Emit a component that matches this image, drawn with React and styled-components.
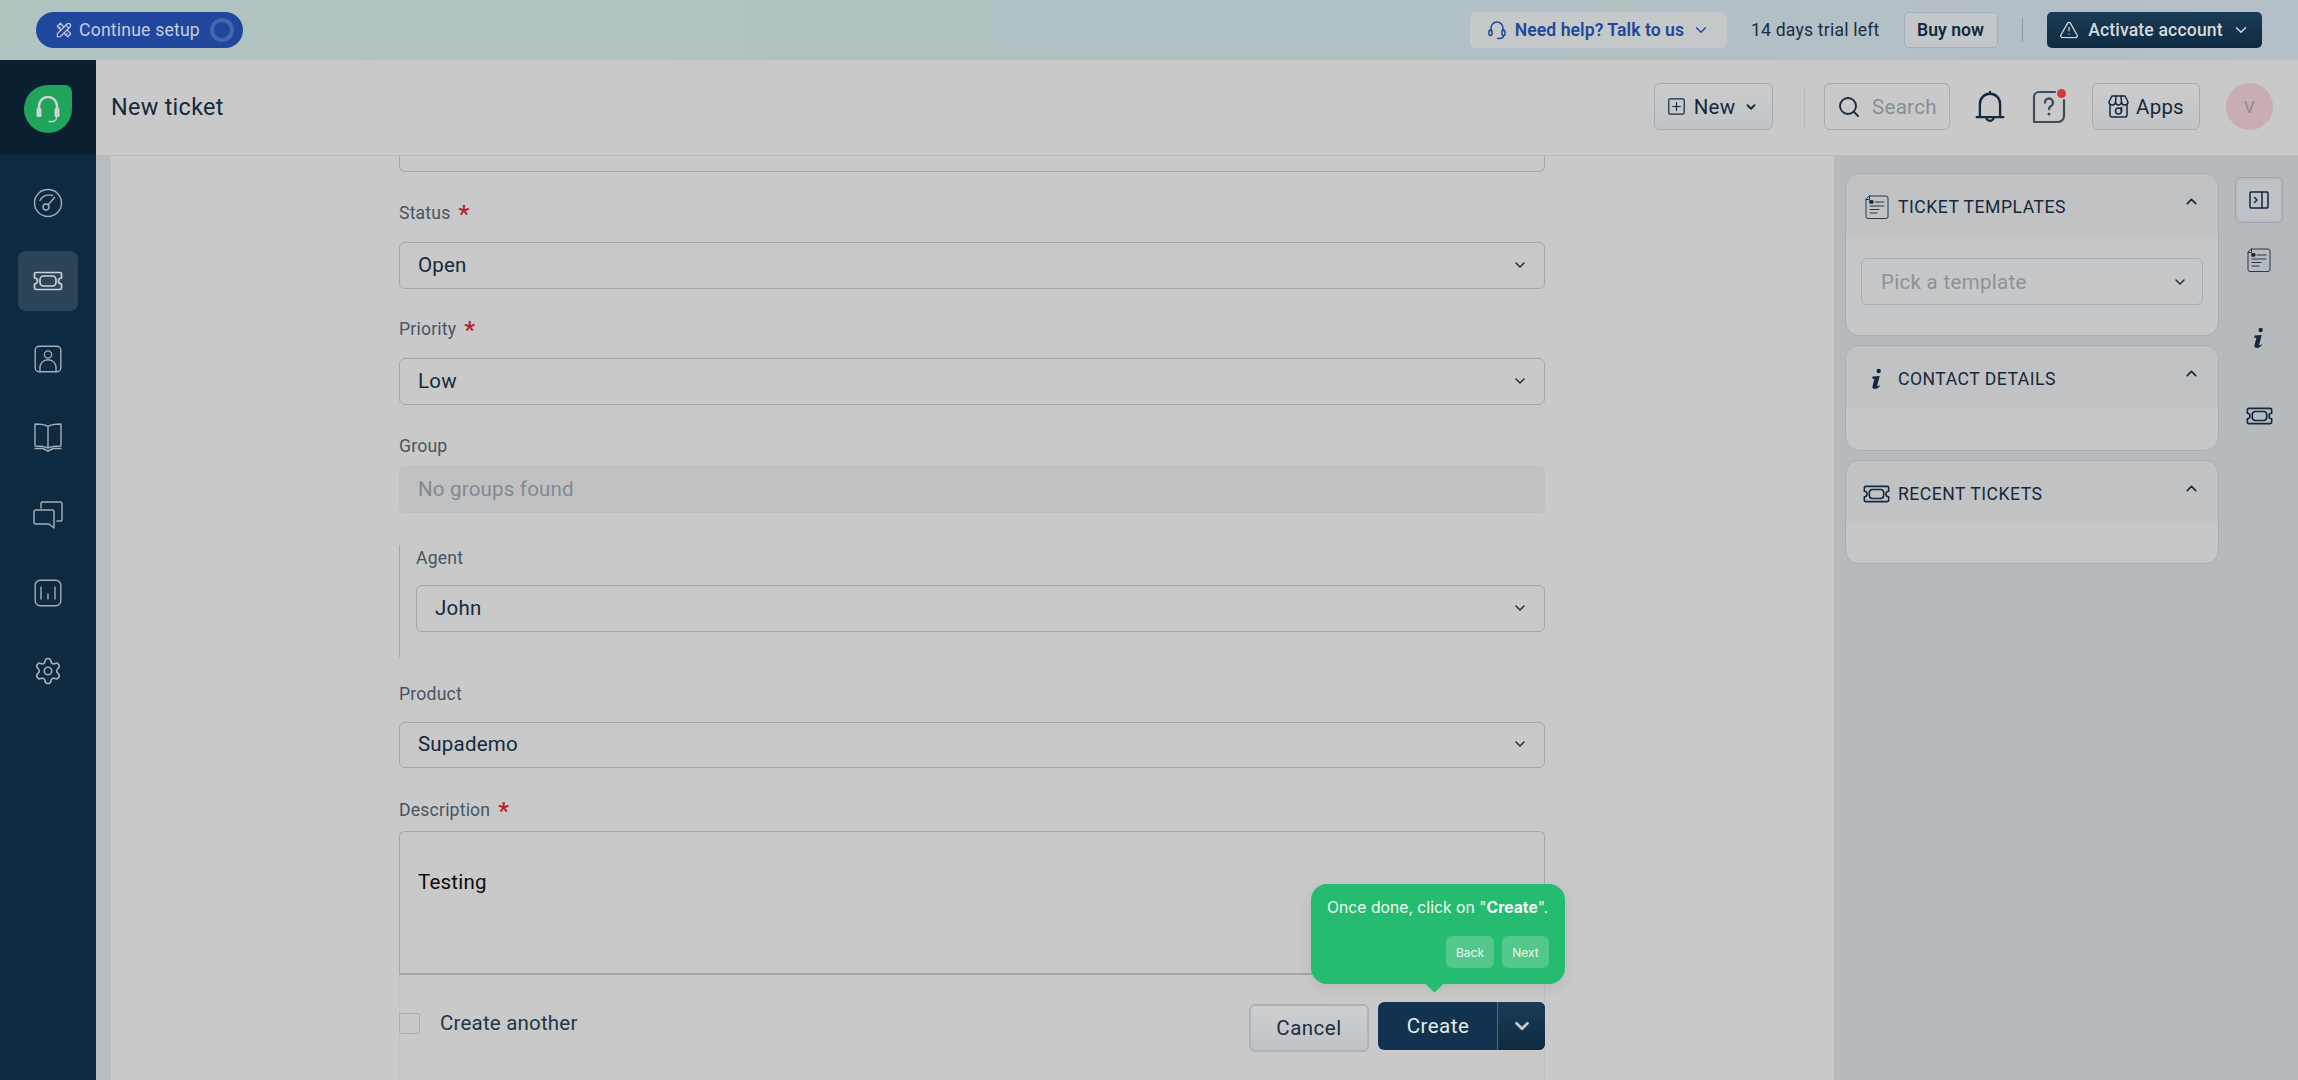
import React from 'react';
import styled, { createGlobalStyle } from 'styled-components';
import { ChevronDown, ChevronUp, Search, Settings, TriangleAlert } from 'lucide-react';
import { TbTools } from 'react-icons/tb';

const Global = createGlobalStyle`
  html, body { margin: 0; padding: 0; height: 1080px; overflow: hidden; }
  body { font-family: Roboto, "Liberation Sans", sans-serif; background: #c9c9c9; color: #14293c; }
  * { box-sizing: border-box; }
`;

const Page = styled.div`display: flex; flex-direction: column; width: 2298px; height: 1080px; overflow: hidden;`;

const TopBar = styled.header`
  height: 60px; flex: none; display: flex; align-items: center; padding: 0 36px;
  background: linear-gradient(90deg, #b1c4c0 0%, #b0c1c2 40%, #b4bfc7 100%);
`;
const SetupPill = styled.div`
  width: 207px; height: 36px; border-radius: 18px; background: #20479d; color: #c5cdde;
  display: flex; align-items: center; padding-left: 19px; gap: 6px; font-size: 17.6px; letter-spacing: .2px;
`;
const SetupRing = styled.span`
  width: 24px; height: 24px; border-radius: 50%; border: 4px solid #4565ac; margin-left: 4px; flex: none;
`;
const TopRight = styled.div`margin-left: auto; display: flex; align-items: center;`;
const HelpChip = styled.div`
  width: 257px; height: 36px; border-radius: 6px; background: #c6c9ca; color: #20479d;
  display: flex; align-items: center; justify-content: center; gap: 8px; font-size: 17.6px; font-weight: 600; letter-spacing: .05px;
`;
const Trial = styled.span`font-size: 17.6px; margin: 0 24px; color: #1a2e40; white-space: nowrap; letter-spacing: .2px;`;
const BuyBtn = styled.div`
  width: 94px; height: 36px; border-radius: 5px; border: 1.5px solid #a5aeb6; background: #c4c7c9;
  display: flex; align-items: center; justify-content: center; font-size: 17.6px; font-weight: 600;
`;
const VLine = styled.span`
  width: 1.5px; background: ${p => p.$c}; height: ${p => p.$h}px; margin: 0 ${p => p.$mr}px 0 ${p => p.$ml}px; flex: none;
`;
const ActivateBtn = styled.div`
  width: 215px; height: 36px; border-radius: 5px; background: linear-gradient(180deg, #1b3c56, #0e2b42); color: #d6d9dc;
  display: flex; align-items: center; justify-content: center; gap: 9px; font-size: 17.6px; font-weight: 500; letter-spacing: .15px;
`;

const Body = styled.div`flex: 1; display: flex; min-height: 0;`;
const Sidebar = styled.aside`width: 96px; flex: none; background: #0e2a40; display: flex; flex-direction: column;`;
const LogoArea = styled.div`height: 95px; background: #0a1f30; display: flex; align-items: center; justify-content: center;`;
const Logo = styled.div`
  width: 48px; height: 48px; background: #20a35b; border-radius: 50% 7px 50% 50%;
  display: flex; align-items: center; justify-content: center; margin-top: 2px;
`;
const SideNav = styled.nav`display: flex; flex-direction: column; align-items: center; gap: 18px; padding-top: 18px;`;
const SideItem = styled.div`
  width: 60px; height: 60px; border-radius: 8px; display: flex; align-items: center; justify-content: center;
  background: ${p => p.$active ? '#2b4458' : 'transparent'}; color: ${p => p.$active ? '#cdd2d6' : '#a3aeb6'};
`;

const MainCol = styled.div`flex: 1; display: flex; flex-direction: column; min-width: 0;`;
const Header = styled.div`
  height: 96px; flex: none; background: #c9c9c9; border-bottom: 1px solid #b6bcc2; display: flex; align-items: center; padding: 0 25px 2px 15px;
`;
const Title = styled.h1`margin: 0; font-size: 23.4px; font-weight: 400; color: #15293c; letter-spacing: .3px;`;
const HeaderRight = styled.div`margin-left: auto; display: flex; align-items: center;`;
const HeadBtn = styled.div`
  height: 47px; width: ${p => p.$w}px; border-radius: 6px; border: 1.5px solid #a4adb5; margin-left: ${p => p.$ml || 0}px;
  background: linear-gradient(180deg, #cbcccd, #c1c4c7);
  display: flex; align-items: center; justify-content: center; gap: ${p => p.$gap}px; font-size: 20.5px; color: #15293c; flex: none; letter-spacing: .2px;
`;
const SearchBox = styled.div`
  height: 47px; width: 126px; border-radius: 6px; border: 1.5px solid #a4adb5; display: flex; align-items: center; gap: 11px; padding-left: 12px;
  font-size: 20.5px; color: #858e97; flex: none; letter-spacing: .3px;
`;
const IconSlot = styled.div`width: 40px; display: flex; justify-content: center; position: relative; flex: none; margin-left: ${p => p.$ml}px;`;
const RedDot = styled.span`position: absolute; width: 9px; height: 9px; border-radius: 50%; background: #d23b3b; top: -1px; right: 3px;`;
const Avatar = styled.div`
  width: 47px; height: 47px; border-radius: 50%; background: #c8aeb0; color: #8f8a8e; font-size: 17px; margin-left: 26px;
  display: flex; align-items: center; justify-content: center;
`;

const Content = styled.div`flex: 1; display: flex; min-height: 0; overflow: hidden;`;
const Gutter = styled.div`width: 15px; flex: none; background: #b8bcc0;`;
const FormArea = styled.main`flex: 1; background: #c9c9c9; padding-left: 288px; min-width: 0;`;
const FormCol = styled.div`width: 1146px; display: flex; flex-direction: column; position: relative;`;
const CutField = styled.div`
  height: 16px; border: 1.5px solid #9fa8b1; border-top: 0; border-radius: 0 0 6px 6px;
`;
const Group = styled.div`margin-top: ${p => p.$mt}px;`;
const Label = styled.div`
  height: 24px; line-height: 24px; font-size: 17.6px; color: #465564; display: flex; margin-bottom: ${p => p.$mb}px; letter-spacing: .2px;
`;
const Star = styled.span`color: #b8222c; font-size: 24px; font-weight: 600; margin-left: 8px; line-height: 26px;`;
const Select = styled.div`
  height: ${p => p.$h || 47}px; border: 1.5px solid #9fa8b1; border-radius: 6px; display: flex; align-items: center; justify-content: space-between;
  padding: 0 16px 2px 18px; font-size: 20.5px; color: #15293c; letter-spacing: .2px;
  background: ${p => p.$disabled ? '#c0c1c3' : 'transparent'};
  border-color: ${p => p.$disabled ? '#bcbfc2' : '#9fa8b1'};
  ${p => p.$disabled ? 'color: #808a94;' : ''}
`;
const AgentGroup = styled.div`
  margin-top: 32px; border-left: 1.5px solid #9fa8b1; padding: 1px 0 25px 16px; height: 112px;
`;
const TextArea = styled.div`
  height: 144px; border: 1.5px solid #9fa8b1; border-bottom-width: 2.5px; border-radius: 6px 6px 0 0; padding: 35px 18px 0; font-size: 20.5px; line-height: 30px; color: #0d0d0d; letter-spacing: .2px;
`;
const Footer = styled.div`
  height: 110px; border-left: 1px solid #c0c2c4; border-right: 1px solid #bdc0c3; display: flex; align-items: flex-start; justify-content: space-between; padding-top: 27px;
`;
const CheckRow = styled.label`display: flex; align-items: center; gap: 20px; font-size: 20.5px; color: #20364a; margin: 0 0 0 -1px; height: 42px; letter-spacing: .2px;`;
const Check = styled.span`width: 21px; height: 21px; border: 1.5px solid #a6aeb6; border-radius: 2px; flex: none;`;
const Actions = styled.div`display: flex; gap: 9px; align-items: flex-start; position: relative; margin-right: -1px;`;
const CancelBtn = styled.div`
  width: 120px; height: 48px; border-radius: 6px; border: 2px solid #aeb3b9; margin-top: 2px; background: linear-gradient(180deg, #cdcfd1, #c0c3c6);
  display: flex; align-items: center; justify-content: center; font-size: 20.5px; color: #1b2d40; letter-spacing: .5px;
`;
const CreateBtn = styled.div`
  width: 167px; height: 48px; border-radius: 6px; overflow: hidden; display: flex; background: #12334f; color: #e6e9ec; font-size: 20.5px; box-shadow: 0 0 1px #fff; letter-spacing: .5px;
`;
const CreateMain = styled.div`flex: 1; display: flex; align-items: center; justify-content: center; padding-left: 1px;`;
const CreateCaret = styled.div`
  width: 48px; border-left: 1px solid #4f6a80; background: linear-gradient(180deg, #1b3c56, #0e2a40); color: #c2c8cd; display: flex; align-items: center; justify-content: center;
`;
const Tip = styled.div`
  position: absolute; left: 62px; bottom: 68px; width: 254px; height: 100px; border-radius: 16px; background: #25bc6f; color: #f4fbf7;
  font-family: Inter, sans-serif;
  padding: 13px 16px 0; font-size: 15.7px; line-height: 21px; box-shadow: 0 4px 16px rgba(0,0,0,.08); white-space: nowrap; letter-spacing: .02px;
  &::after { content: ''; position: absolute; left: 117px; bottom: -6px; width: 13px; height: 13px; background: #25bc6f; transform: rotate(45deg); border-radius: 1px; }
`;
const TipActions = styled.div`display: flex; justify-content: flex-end; gap: 8px; margin-top: 18px;`;
const TipBtn = styled.span`
  height: 32px; width: ${p => p.$w}px; background: #52c98a; border-radius: 6px; font-size: 12px; display: flex; align-items: center; justify-content: center; color: #eef9f3;
`;

const RightPanel = styled.aside`width: 464px; flex: none; background: #b6babd; display: flex; padding: 17px 0 0 11px; gap: 16px;`;
const Cards = styled.div`width: 374px; display: flex; flex-direction: column; gap: 9px; flex: none;`;
const Card = styled.section`
  border: 1.5px solid #a4acb4; border-radius: 14px; background: #c6c7c8; height: ${p => p.$h}px; overflow: hidden;
`;
const CardHead = styled.div`
  height: 62px; background: #c0c2c4; display: flex; align-items: center; padding: 4px 18px 0 ${p => p.$pl}px; font-size: 17.6px; color: #15293c; letter-spacing: .5px;
`;
const CardIcon = styled.span`width: ${p => p.$w}px; display: flex; justify-content: center; margin-right: ${p => p.$mr}px; flex: none;`;
const CardChevron = styled.span`margin-left: auto; display: flex; margin-top: -11px;`;
const CardBody = styled.div`padding: 22px 15px 0;`;
const TemplateSelect = styled.div`
  height: 47px; border: 1.5px solid #a4acb4; border-radius: 6px; display: flex; align-items: center; justify-content: space-between; padding: 0 14px 0 19px; font-size: 20.5px; color: #8b939b; letter-spacing: .3px;
`;
const Rail = styled.div`display: flex; flex-direction: column; align-items: center; width: 48px; padding-top: 4px; gap: 32px; flex: none;`;
const RailBtn = styled.div`
  width: 48px; height: 46px; display: flex; align-items: center; justify-content: center; color: #15293c; border-radius: 6px; flex: none;
  ${p => p.$active ? 'border: 1.5px solid #9ba6b0; background: #bfc2c6; box-shadow: inset 0 0 3px #aab0b6; margin-bottom: -18px;' : ''}
`;

const I = ({ w, h = w, vb, children, c = 'currentColor', sw = 1.5 }) => (
  <svg width={w} height={h} viewBox={vb} fill="none" stroke={c} strokeWidth={sw} strokeLinecap="round" strokeLinejoin="round">{children}</svg>
);

const Ticket = ({ w = 30, h = 20, sw = 1.7 }) => (
  <I w={w} h={h} vb="0 0 30 20" sw={sw}>
    <path d="M3 1.500h24a1.500 1.500 0 0 1 1.500 1.500v4a3 3 0 0 0 0 6v4a1.500 1.500 0 0 1-1.500 1.500H3A1.500 1.500 0 0 1 1.500 17v-4a3 3 0 0 0 0-6V3A1.500 1.500 0 0 1 3 1.500z" />
    <rect x="7" y="5" width="16" height="10" rx="3.500" />
  </I>
);
const Template = ({ s = 24 }) => (
  <I w={s} h={s} vb="0 0 24 24" sw={.9}>
    <path d="M4.500 1h16.500a2 2 0 0 1 2 2v18.500a2 2 0 0 1-2 2H3a2 2 0 0 1-2-2V4.500z" />
    <path d="M1 4.500h3.500V1" />
    <rect x="5" y="5.600" width="3" height="2.600" fill="currentColor" />
    <path d="M10 7h9M5 11h14M5 14.500h9M5 18h7" />
  </I>
);
const InfoI = ({ s = 22 }) => (
  <svg width={s} height={s} viewBox="0 0 22 22" fill="currentColor">
    <circle cx="12.700" cy="3" r="2.200" />
    <path d="M6.500 8.600l7.200-.6-2.500 9.600c-.2.800.6 1 1.300.4l1-.8.5.7c-1.600 1.800-3.300 3-5.300 3-1.700 0-2.600-1-2.200-2.600L8.400 11 6.400 10.700z" />
  </svg>
);
const Gauge = () => (
  <I w={30} h={30} vb="0 0 30 30" sw={1.4}>
    <circle cx="15" cy="15" r="13.500" />
    <path d="M7 12.500C9 7.500 15 6 19.500 7.500" />
    <circle cx="13" cy="19" r="3" />
    <path d="M15 17l6.500-7.500" />
  </I>
);
const Contact = () => (
  <I w={28} h={28} vb="0 0 28 28" sw={1.4}>
    <rect x="1.200" y="1.200" width="25.600" height="25.600" rx="4" />
    <circle cx="14" cy="9.500" r="3.600" />
    <path d="M6 26.800v-4c0-4.500 3-8 8-8s8 3.500 8 8v4" />
  </I>
);
const Book = () => (
  <I w={28} h={30} vb="0 0 28 30" sw={1.4}>
    <path d="M14 4.500C11 2.500 6 2 1 2v22c5 0 10 .5 13 2 3-1.500 8-2 13-2V2c-5 0-10 .5-13 2.500zM14 4.500V26" />
    <path d="M1 26.500h8l5 2.500 5-2.500h8" />
  </I>
);
const Chat = () => (
  <I w={30} h={28} vb="0 0 30 28" sw={1.4}>
    <path d="M8 7V2.500A1.500 1.500 0 0 1 9.500 1h18A1.500 1.500 0 0 1 29 2.500v16a1.500 1.500 0 0 1-1.500 1.500H24" />
    <path d="M2.500 9h17A1.500 1.500 0 0 1 21 10.500V27l-5-4H2.500A1.500 1.500 0 0 1 1 21.500v-11A1.500 1.500 0 0 1 2.500 9z" />
  </I>
);
const Report = () => (
  <I w={28} h={28} vb="0 0 28 28" sw={1.4}>
    <rect x="1.200" y="1.200" width="25.600" height="25.600" rx="5" />
    <path d="M7 8v12M14 15v5M21 8v12" />
  </I>
);
const Headset = ({ s = 19, c = 'currentColor' }) => (
  <I w={s} h={s} vb="0 0 20 20" c={c} sw={1.5}>
    <path d="M4 11V8a6 6 0 0 1 12 0v3" />
    <rect x="2" y="10" width="3" height="5.500" rx="1.200" />
    <rect x="15" y="10" width="3" height="5.500" rx="1.200" />
    <path d="M16.500 15.500c0 2-1.500 3-4 3h-2" />
  </I>
);
const LogoHead = () => (
  <svg width="26" height="28" viewBox="0 0 26 28" fill="none">
    <path d="M4 15V11a9 9 0 0 1 18 0v4" stroke="#cfd3d0" strokeWidth="2.600" />
    <rect x="1.500" y="13" width="5" height="9" rx="1.500" fill="#cfd3d0" />
    <rect x="19.500" y="13" width="5" height="9" rx="1.500" fill="#cfd3d0" />
    <path d="M21.500 22c0 3-1.500 4.500-4 4.500h-4" stroke="#cfd3d0" strokeWidth="1.300" />
  </svg>
);
const PlusBox = () => (
  <I w={17} h={17} vb="0 0 17 17" sw={1.2}>
    <rect x=".8" y=".8" width="15.400" height="15.400" rx="1.500" />
    <path d="M8.500 4.700v7.600M4.700 8.500h7.600" />
  </I>
);
const Bell = () => (
  <I w={30} h={34} vb="0 0 28 32" sw={2.200}>
    <path d="M1.500 25.500h25M4.500 25.500V13a9.500 9.500 0 0 1 19 0v12.500M14 3.500V1.800M10.500 25.500a3.500 3.500 0 0 0 7 0" />
  </I>
);
const HelpBox = () => (
  <I w={36} h={34} vb="0 0 36 34" c="#3a4e60" sw={2.200}>
    <path d="M24 2H8a5 5 0 0 0-5 5v25h24a6 6 0 0 0 6-6V10" />
    <path d="M14 12.500a4 4 0 1 1 6 3.500c-1.500.9-2 1.500-2 3" strokeWidth="2.400" />
    <circle cx="18" cy="24" r=".7" fill="#3a4e60" strokeWidth="1.600" />
  </I>
);
const Store = () => (
  <I w={21} h={23} vb="0 0 21 23" sw={1.500}>
    <path d="M4 1h13l3 6c0 2-1.500 3-3.200 3S13.800 9 13.500 7.500C13 9 12 10 10.500 10S8 9 7.500 7.500C7.200 9 6 10 4.200 10S1 9 1 7L4 1z" />
    <path d="M8 1L7.500 7.500M13 1l.5 6.500" />
    <path d="M2 9.500V20a2 2 0 0 0 2 2h13a2 2 0 0 0 2-2V9.500" />
    <circle cx="10.500" cy="16" r="3" />
    <path d="M13.500 12.500V16" />
  </I>
);
const PanelCollapse = () => (
  <I w={20} h={18} vb="0 0 20 18" sw={1.500}>
    <rect x="1" y="1" width="18" height="16" rx="1" />
    <path d="M13 1v16M5.500 6.500L8 9l-2.500 2.500" />
  </I>
);

const Field = ({ label, req, mt, mb, h, disabled, children }) => (
  <Group $mt={mt}>
    <Label $mb={mb}>{label}{req && <Star>*</Star>}</Label>
    <Select $h={h} $disabled={disabled}>
      <span>{children}</span>
      {!disabled && <ChevronDown size={16} strokeWidth={2} />}
    </Select>
  </Group>
);

const SideCard = ({ h, icon, iconW, mr, pl, title, children }) => (
  <Card $h={h}>
    <CardHead $pl={pl}>
      <CardIcon $w={iconW} $mr={mr}>{icon}</CardIcon>
      {title}
      <CardChevron><ChevronUp size={17} strokeWidth={2.200} /></CardChevron>
    </CardHead>
    {children}
  </Card>
);

export default function App() {
  return (
    <Page>
      <Global />
      <TopBar>
        <SetupPill>
          <TbTools size={18} strokeWidth={1.500} />
          <span>Continue setup</span>
          <SetupRing />
        </SetupPill>
        <TopRight>
          <HelpChip>
            <Headset s={20} />
            <span>Need help? Talk to us</span>
            <ChevronDown size={18} strokeWidth={1.800} />
          </HelpChip>
          <Trial>14 days trial left</Trial>
          <BuyBtn>Buy now</BuyBtn>
          <VLine $h={24} $ml={24} $mr={24} $c="#8e9aa3" />
          <ActivateBtn>
            <TriangleAlert size={20} strokeWidth={1.500} />
            <span>Activate account</span>
            <ChevronDown size={18} strokeWidth={1.800} />
          </ActivateBtn>
        </TopRight>
      </TopBar>
      <Body>
        <Sidebar>
          <LogoArea><Logo><LogoHead /></Logo></LogoArea>
          <SideNav>
            <SideItem><Gauge /></SideItem>
            <SideItem $active><Ticket /></SideItem>
            <SideItem><Contact /></SideItem>
            <SideItem><Book /></SideItem>
            <SideItem><Chat /></SideItem>
            <SideItem><Report /></SideItem>
            <SideItem><Settings size={30} strokeWidth={1.300} /></SideItem>
          </SideNav>
        </Sidebar>
        <MainCol>
          <Header>
            <Title>New ticket</Title>
            <HeaderRight>
              <HeadBtn $w={119} $gap={9}>
                <PlusBox />
                <span>New</span>
                <ChevronDown size={14} strokeWidth={3.200} />
              </HeadBtn>
              <VLine $h={40} $ml={31} $mr={19} $c="#b4b9bd" />
              <SearchBox>
                <Search size={24} strokeWidth={1.800} color="#15293c" />
                <span>Search</span>
              </SearchBox>
              <IconSlot $ml={20}><Bell /></IconSlot>
              <IconSlot $ml={19}><HelpBox /><RedDot /></IconSlot>
              <HeadBtn $w={108} $gap={7} $ml={23}>
                <Store />
                <span>Apps</span>
              </HeadBtn>
              <Avatar>V</Avatar>
            </HeaderRight>
          </Header>
          <Content>
            <Gutter />
            <FormArea>
              <FormCol>
                <CutField />
                <Field label="Status" req mt={29} mb={17}>Open</Field>
                <Field label="Priority" req mt={28} mb={17}>Low</Field>
                <Field label="Group" mt={29} mb={8} disabled>No groups found</Field>
                <AgentGroup>
                  <Label $mb={15}>Agent</Label>
                  <Select><span>John</span><ChevronDown size={16} strokeWidth={2} /></Select>
                </AgentGroup>
                <Field label="Product" mt={25} mb={16} h={46}>Supademo</Field>
                <Group $mt={30}>
                  <Label $mb={9}>Description<Star>*</Star></Label>
                  <TextArea>Testing</TextArea>
                </Group>
                <Footer>
                  <CheckRow><Check />Create another</CheckRow>
                  <Actions>
                    <CancelBtn>Cancel</CancelBtn>
                    <CreateBtn>
                      <CreateMain>Create</CreateMain>
                      <CreateCaret><ChevronDown size={22} strokeWidth={3} /></CreateCaret>
                    </CreateBtn>
                    <Tip>
                      Once done, click on "<b>Create</b>".
                      <TipActions>
                        <TipBtn $w={48}>Back</TipBtn>
                        <TipBtn $w={47}>Next</TipBtn>
                      </TipActions>
                    </Tip>
                  </Actions>
                </Footer>
              </FormCol>
            </FormArea>
            <RightPanel>
              <Cards>
                <SideCard h={163} pl={19} iconW={24} mr={9} icon={<Template />} title="TICKET TEMPLATES">
                  <CardBody>
                    <TemplateSelect>
                      <span>Pick a template</span>
                      <ChevronDown size={16} strokeWidth={2} color="#15293c" />
                    </TemplateSelect>
                  </CardBody>
                </SideCard>
                <SideCard h={106} pl={19} iconW={24} mr={9} icon={<InfoI />} title="CONTACT DETAILS" />
                <SideCard h={104} pl={17} iconW={27} mr={8} icon={<Ticket w={27} h={18} sw={1.800} />} title="RECENT TICKETS" />
              </Cards>
              <Rail>
                <RailBtn $active><PanelCollapse /></RailBtn>
                <RailBtn><Template /></RailBtn>
                <RailBtn><InfoI /></RailBtn>
                <RailBtn><Ticket w={27} h={18} sw={1.800} /></RailBtn>
              </Rail>
            </RightPanel>
          </Content>
        </MainCol>
      </Body>
    </Page>
  );
}
